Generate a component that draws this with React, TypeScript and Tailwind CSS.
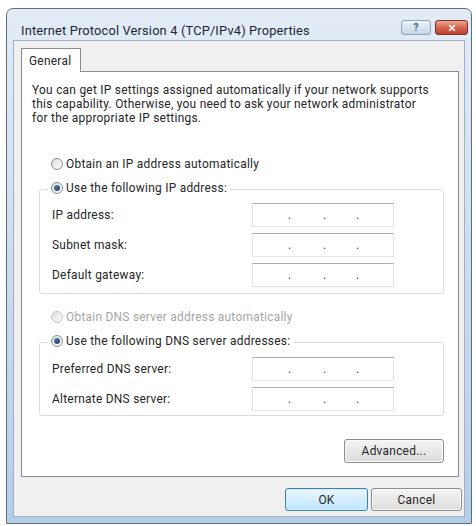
import { X } from "lucide-react";

type RadioProps = {
  label: string;
  checked?: boolean;
  disabled?: boolean;
  className?: string;
};

function Radio({ label, checked, disabled, className = "" }: RadioProps) {
  return (
    <div
      className={`relative z-10 flex h-[16px] w-fit items-center gap-[3px] bg-white px-[3px] ${className}`}
    >
      <span
        className={`flex h-[12px] w-[12px] items-center justify-center rounded-full border bg-gradient-to-br from-[#dcdcdc] to-white ${
          disabled ? "border-[#c6c6c6]" : "border-[#8a8d92]"
        }`}
      >
        {checked ? (
          <span className="h-[6px] w-[6px] rounded-full bg-gradient-to-br from-[#5a86b0] to-[#1f3e5c]" />
        ) : null}
      </span>
      <span className={disabled ? "text-[#a5a5a5]" : "text-[#262626]"}>{label}</span>
    </div>
  );
}

function IpField() {
  return (
    <div className="flex h-[24px] w-[142px] items-center border border-[#e2e6ec] border-t-[#a9acb2] bg-white pl-[35px] text-[#3a3a3a]">
      <span className="w-[3px] text-center">.</span>
      <span className="ml-[32px] w-[3px] text-center">.</span>
      <span className="ml-[30px] w-[3px] text-center">.</span>
    </div>
  );
}

function FieldRow({ label }: { label: string }) {
  return (
    <div className="flex h-[24px] items-center">
      <span className="w-[200px] text-[#262626]">{label}</span>
      <IpField />
    </div>
  );
}

function Button({
  label,
  primary,
  className = "",
}: {
  label: string;
  primary?: boolean;
  className?: string;
}) {
  return (
    <div
      className={`flex items-center justify-center rounded-[3px] border text-[#262626] ${
        primary
          ? "border-[#3c7fb1] bg-gradient-to-b from-[#eaf6fd] to-[#bee6fd] shadow-[inset_0_0_0_1px_#d4eefc]"
          : "border-[#8c8c8c] bg-gradient-to-b from-[#f4f4f4] to-[#dcdcdc] shadow-[inset_0_0_0_1px_#fbfbfb]"
      } ${className}`}
    >
      {label}
    </div>
  );
}

export default function App() {
  return (
    <div className="h-[526px] w-[476px] bg-white pl-[6px] pt-[8px] font-['Segoe_UI',Roboto,sans-serif] text-[11.9px] leading-[14px] tracking-[0.27px]">
      <div className="flex h-[516px] w-[466px] flex-col rounded-t-[7px] border border-[#5d6d80] bg-gradient-to-b from-[#e3ecf6] via-[#cddcee] to-[#b6cde8]">
        {/* title bar */}
        <div className="flex h-[31px] items-start justify-between">
          <span className="ml-[14px] mt-[14px] text-[12.8px] leading-[16px] tracking-[0.18px] text-[#1b2636]">
            Internet Protocol Version 4 (TCP/IPv4) Properties
          </span>
          <div className="mr-[3px] mt-[11px] flex gap-[4px]">
            <div className="flex h-[15px] w-[30px] items-center justify-center rounded-[3px] border border-[#8ea2b9] bg-gradient-to-b from-[#eef3f9] to-[#c6d5e7] text-[10px] font-bold leading-none text-[#4b5d73]">
              ?
            </div>
            <div className="flex h-[15px] w-[33px] items-center justify-center rounded-[3px] border border-[#7d2e24] bg-gradient-to-b from-[#e9a794] via-[#d5664f] to-[#c0402c]">
              <X className="h-[10px] w-[10px] text-white" strokeWidth={3.5} />
            </div>
          </div>
        </div>

        {/* client area */}
        <div className="mx-[6px] mb-[6px] flex flex-1 flex-col border border-[#9cb1c9] bg-[#f0f0f0] pl-[7px] pt-[7px]">
          <div className="relative z-10 -mb-px flex h-[24px] w-[60px] items-center border border-b-0 border-[#898c95] bg-white pl-[7px] text-[#262626]">
            General
          </div>

          <div className="flex h-[406px] w-[438px] flex-col border border-[#898c95] bg-white">
            <p className="ml-[10px] mt-[11px] whitespace-nowrap text-[#262626]">
              You can get IP settings assigned automatically if your network supports
              <br />
              this capability. Otherwise, you need to ask your network administrator
              <br />
              for the appropriate IP settings.
            </p>

            <Radio className="ml-[26px] mt-[31px]" label="Obtain an IP address automatically" />
            <Radio className="ml-[26px] mt-[8px]" label="Use the following IP address:" checked />
            <div className="-mt-[7px] ml-[17px] mr-[14px] flex flex-col gap-[6px] rounded-[3px] border border-[#dcdcdc] pb-[6px] pl-[12px] pt-[13px]">
              <FieldRow label="IP address:" />
              <FieldRow label="Subnet mask:" />
              <FieldRow label="Default gateway:" />
            </div>

            <Radio
              className="ml-[26px] mt-[15px]"
              label="Obtain DNS server address automatically"
              disabled
            />
            <Radio className="ml-[26px] mt-[8px]" label="Use the following DNS server addresses:" checked />
            <div className="-mt-[7px] ml-[17px] mr-[14px] flex flex-col gap-[6px] rounded-[3px] border border-[#dcdcdc] pb-[4px] pl-[12px] pt-[14px]">
              <FieldRow label="Preferred DNS server:" />
              <FieldRow label="Alternate DNS server:" />
            </div>

            <Button label="Advanced..." className="mr-[14px] mt-[23px] h-[24px] w-[100px] self-end" />
          </div>

          <div className="mr-[2px] mt-[11px] flex justify-end gap-[3px]">
            <Button label="OK" primary className="h-[23px] w-[83px]" />
            <Button label="Cancel" className="h-[23px] w-[91px]" />
          </div>
        </div>
      </div>
    </div>
  );
}
